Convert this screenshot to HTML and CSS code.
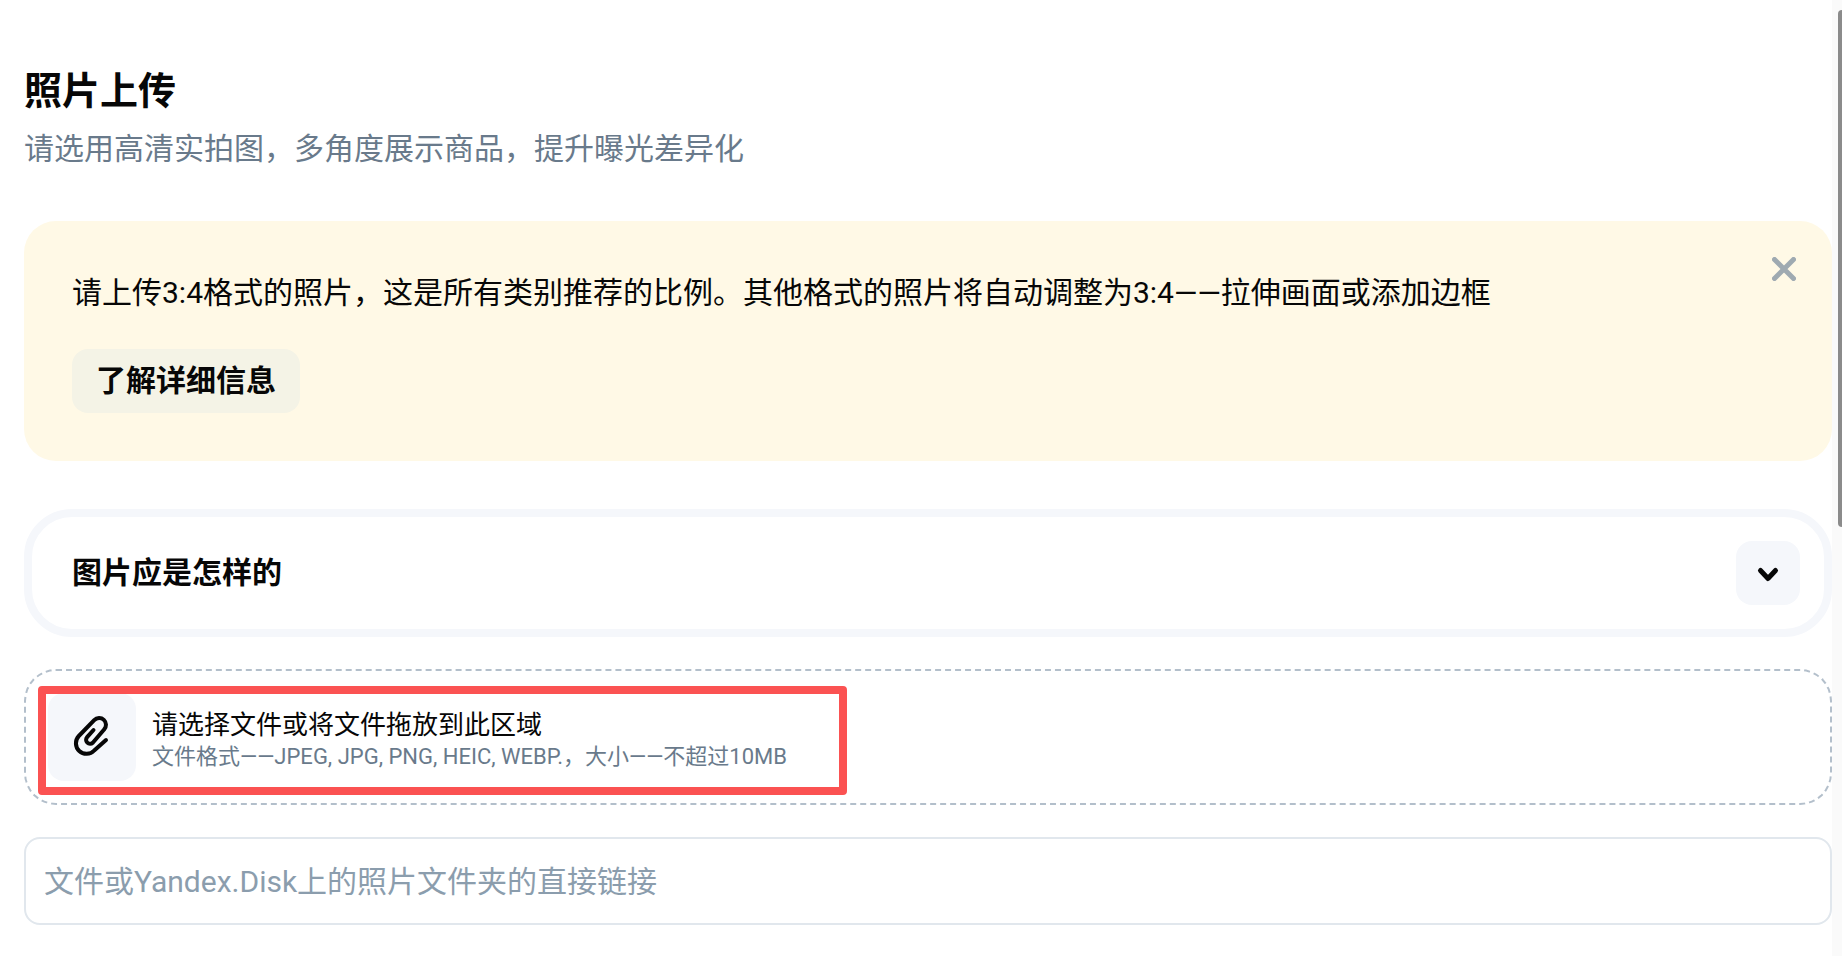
FILE: index.html
```html
<!DOCTYPE html>
<html lang="zh-CN">
<head>
    <meta charset="UTF-8">
    <meta name="viewport" content="width=device-width, initial-scale=1.0">
    <title>照片上传</title>
    <link rel="stylesheet" href="styles.css">
</head>
<body>
    <div class="page">
        <main class="content">
            <header class="heading">
                <h1>照片上传</h1>
                <p>请选用高清实拍图，多角度展示商品，提升曝光差异化</p>
            </header>

            <section class="notice">
                <div class="notice-body">
                    <p>请上传3:4格式的照片，这是所有类别推荐的比例。其他格式的照片将自动调整为3:4——拉伸画面或添加边框</p>
                    <button type="button" class="btn-more">了解详细信息</button>
                </div>
                <button type="button" class="btn-close" aria-label="关闭">
                    <svg viewBox="0 0 24 24" width="24" height="24"><path d="M2.5 2.5l19 19M21.5 2.5l-19 19"/></svg>
                </button>
            </section>

            <section class="accordion">
                <h2>图片应是怎样的</h2>
                <button type="button" class="btn-toggle" aria-label="展开">
                    <svg viewBox="0 0 24 24" width="24" height="24"><path d="M4.500 9.500l7.500 8 7.500-8"/></svg>
                </button>
            </section>

            <div class="dropzone">
                <input type="file" id="photo-file" class="file-input" multiple>
                <label for="photo-file" class="file-label">
                    <span class="file-icon">
                        <svg viewBox="0 0 48 48" width="48" height="48"><path d="M25.500 17L19.100 24.100A4 4 0 0 0 24.800 29.700L36.100 16.500A6.800 6.800 0 0 0 26.200 7.100L10.800 23A10.500 10.500 0 0 0 26.200 37.500L38 27"/></svg>
                    </span>
                    <span class="file-text">
                        <span class="file-title">请选择文件或将文件拖放到此区域</span>
                        <span class="file-hint">文件格式——JPEG, JPG, PNG, HEIC, WEBP.，大小——不超过10MB</span>
                    </span>
                </label>
                <div class="highlight"></div>
            </div>

            <input type="url" class="link-input" aria-label="照片链接" placeholder="文件或Yandex.Disk上的照片文件夹的直接链接">
        </main>
        <div class="scrollbar"><div class="scrollbar-thumb"></div></div>
    </div>
</body>
</html>
```
FILE: styles.css
```css
* { box-sizing: border-box; }
body { margin: 0; font-family: Roboto, 'Noto Sans CJK SC', sans-serif; font-size: 30px; line-height: 40px; color: #070707; background-color: #fff; }
h1, h2, p { margin: 0; }
button { border: none; padding: 0; font: inherit; color: inherit; cursor: pointer; }
svg { display: block; fill: none; stroke: currentColor; stroke-linecap: round; stroke-linejoin: round; }
.page { display: flex; min-height: 100vh; }
.content { flex: 1; min-width: 0; padding: 65px 0 24px 24px; }
.heading h1 { font-size: 38px; line-height: 52px; font-weight: 700; }
.heading p { margin-top: 12px; color: #697a8b; }
.notice { display: flex; justify-content: space-between; align-items: flex-start; margin-top: 52px; padding: 32px; background-color: #fff9e6; border-radius: 32px; }
.notice-body { padding: 20px 0 16px 16px; }
.btn-more { display: block; margin-top: 36px; padding: 12px 24px; background-color: #f4f3e6; border-radius: 16px; font-weight: 700; }
.btn-close { padding: 4px; background: none; color: #9faab1; }
.btn-close svg { stroke-width: 5; }
.accordion { display: flex; justify-content: space-between; align-items: center; margin-top: 48px; padding: 24px 24px 24px 40px; border: 8px solid #f5f7fb; border-radius: 48px; }
.accordion h2 { font-size: 30px; font-weight: 700; }
.btn-toggle { display: flex; justify-content: center; align-items: center; width: 64px; height: 64px; border-radius: 16px; background-color: #f5f7fb; }
.btn-toggle svg { stroke-width: 5; }
.dropzone { position: relative; margin-top: 32px; padding: 22px; border: 2px dashed #b3bfcb; border-radius: 32px; }
.file-input { position: absolute; width: 1px; height: 1px; opacity: 0; }
.file-label { display: flex; align-items: center; gap: 16px; cursor: pointer; }
.file-icon { display: flex; justify-content: center; align-items: center; width: 88px; height: 88px; border-radius: 16px; background-color: #f5f7fb; }
.file-icon svg { stroke-width: 4; }
.file-text { display: flex; flex-direction: column; padding-top: 4px; }
.file-title { font-size: 26px; line-height: 36px; }
.file-hint { font-size: 22px; line-height: 28px; color: #697a8b; }
.highlight { position: absolute; top: 15px; left: 12px; width: 809px; height: 109px; border: 8px solid #fb5252; border-radius: 4px; pointer-events: none; }
.link-input { display: block; width: 100%; height: 88px; margin-top: 32px; padding: 0 18px; border: 2px solid #e1e7ed; border-radius: 16px; background-color: #fff; font: inherit; color: inherit; }
.link-input::placeholder { color: #8b9dad; opacity: 1; }
.scrollbar { width: 10px; padding: 10px 0 0 6px; background-color: #fafafa; overflow: hidden; }
.scrollbar-thumb { height: 517px; border-radius: 6px 0 0 6px; background-color: #8b8b8b; }
```
